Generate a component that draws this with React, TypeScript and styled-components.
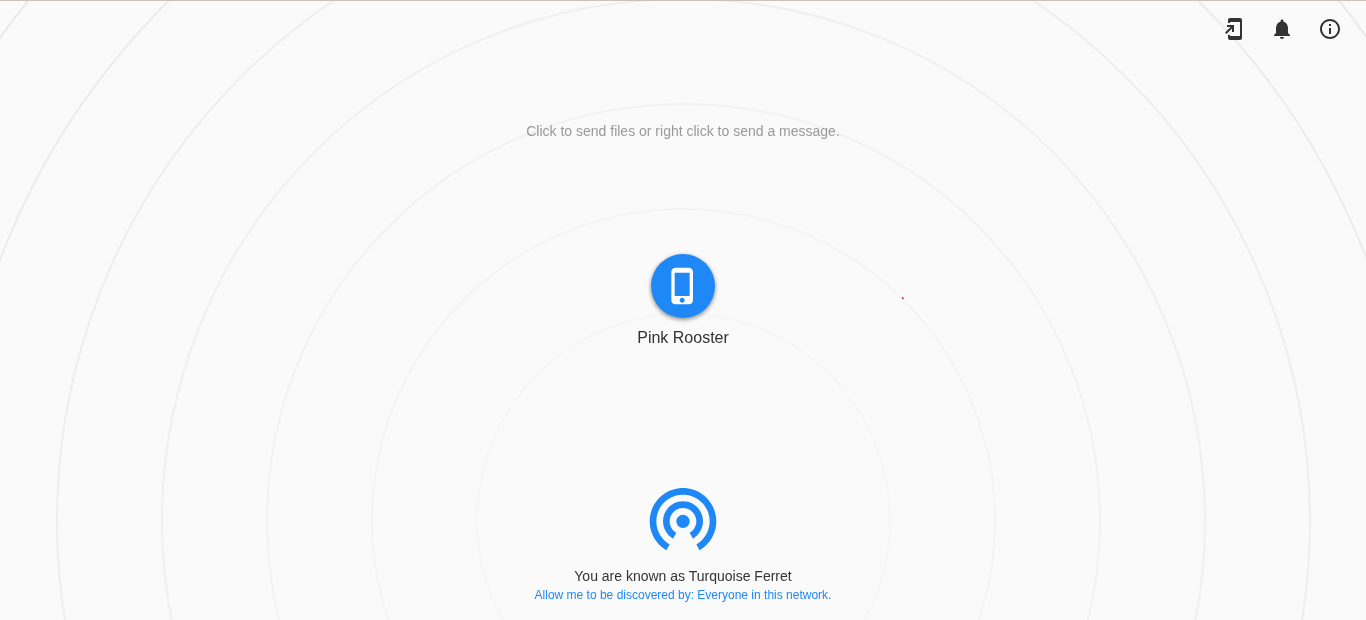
import React from 'react';
import styled, { createGlobalStyle } from 'styled-components';

const GlobalStyle = createGlobalStyle`
  *, *::before, *::after { box-sizing: border-box; }
  body {
    margin: 0;
    background: #fafafa;
    color: #333333;
    font-family: "Liberation Sans", Arial, sans-serif;
  }
`;

const Page = styled.div`
  display: flex;
  flex-direction: column;
  min-height: 100vh;
  border-top: 1px solid #cbc0bb;
`;

const Backdrop = styled.svg`
  position: fixed;
  inset: 0;
  width: 100%;
  height: 100%;
  z-index: -1;
  fill: none;
`;

const Header = styled.header`
  display: flex;
  justify-content: flex-end;
  align-items: center;
  gap: 8px;
  height: 56px;
  padding: 0 16px;
`;

const IconButton = styled.button`
  display: flex;
  align-items: center;
  justify-content: center;
  width: 40px;
  height: 40px;
  padding: 0;
  border: 0;
  border-radius: 50%;
  background: transparent;
  color: inherit;
  cursor: pointer;
`;

const Icon = styled.svg<{ $size: number }>`
  display: block;
  width: ${(p) => p.$size}px;
  height: ${(p) => p.$size}px;
  fill: currentColor;
`;

const Main = styled.main`
  flex: 1;
  display: flex;
  flex-direction: column;
  align-items: center;
  padding-top: 64px;
`;

const Instructions = styled.p`
  margin: 0;
  font-size: 14px;
  line-height: 20px;
  color: #999999;
  text-align: center;
`;

const Peers = styled.div`
  flex: 1;
  display: flex;
  align-items: center;
  justify-content: center;
  padding-bottom: 18px;
`;

const Peer = styled.button`
  display: flex;
  flex-direction: column;
  align-items: center;
  gap: 10px;
  padding: 0;
  border: 0;
  background: transparent;
  color: inherit;
  font-family: inherit;
  font-size: 16px;
  line-height: 20px;
  cursor: pointer;
`;

const PeerBadge = styled.span`
  display: flex;
  padding: 12px;
  border-radius: 50%;
  background: #1e88f7;
  color: #ffffff;
  box-shadow: 0 2px 4px rgba(0, 0, 0, 0.3), 0 1px 5px rgba(0, 0, 0, 0.2);
`;

const Footer = styled.footer`
  display: flex;
  flex-direction: column;
  align-items: center;
  padding-bottom: 16px;
  text-align: center;
`;

const Beacon = styled.div`
  margin-bottom: 8px;
  color: #1e88f7;
`;

const DisplayName = styled.div`
  font-size: 14px;
  line-height: 20px;
`;

const Discovery = styled.div`
  font-size: 12px;
  line-height: 18px;
  color: #1e88f7;
`;

const paths = {
  home: 'M18 1.01L8 1c-1.1 0-2 .9-2 2v3h2V5h10v14H8v-1H6v3c0 1.1.9 2 2 2h10c1.1 0 2-.9 2-2V3c0-1.1-.9-1.99-2-1.99zM10 15h2V8H5v2h3.59L3 15.59 4.41 17 10 11.41z',
  bell: 'M12 22c1.1 0 2-.9 2-2h-4c0 1.1.89 2 2 2zm6-6v-5c0-3.07-1.64-5.64-4.5-6.32V4c0-.83-.67-1.5-1.5-1.5s-1.5.67-1.5 1.5v.68C7.63 5.36 6 7.92 6 11v5l-2 2v1h16v-1l-2-2z',
  info: 'M11 17h2v-6h-2v6zm1-15C6.48 2 2 6.48 2 12s4.48 10 10 10 10-4.48 10-10S17.52 2 12 2zm0 18c-4.41 0-8-3.59-8-8s3.59-8 8-8 8 3.59 8 8-3.59 8-8 8zM11 9h2V7h-2v2z',
  phone: 'M15.5 1h-8C6.12 1 5 2.12 5 3.5v17C5 21.88 6.12 23 7.5 23h8c1.38 0 2.5-1.12 2.5-2.5v-17C18 2.12 16.88 1 15.5 1zm-4 21c-.83 0-1.5-.67-1.5-1.5s.67-1.5 1.5-1.5 1.5.67 1.5 1.5-.67 1.5-1.5 1.5zm4.5-4H7V4h9v14z',
  tethering: 'M12 11c-1.1 0-2 .9-2 2s.9 2 2 2 2-.9 2-2-.9-2-2-2zm6 2c0-3.31-2.69-6-6-6s-6 2.69-6 6c0 2.22 1.21 4.15 3 5.19l1-1.74c-1.19-.7-2-1.97-2-3.45 0-2.21 1.79-4 4-4s4 1.79 4 4c0 1.48-.81 2.75-2 3.45l1 1.74c1.79-1.04 3-2.97 3-5.19zM12 3C6.48 3 2 7.48 2 13c0 3.7 2.01 6.92 4.99 8.65l1-1.73C5.61 18.53 4 15.96 4 13c0-4.42 3.58-8 8-8s8 3.58 8 8c0 2.96-1.61 5.53-4 6.92l1 1.73c2.99-1.73 5-4.95 5-8.65 0-5.52-4.48-10-10-10z',
};

function Glyph({ name, size = 24 }: { name: keyof typeof paths; size?: number }) {
  return (
    <Icon $size={size} viewBox="0 0 24 24" aria-hidden="true">
      <path d={paths[name]} />
    </Icon>
  );
}

const radii = [101.5, 206.5, 311.5, 416.5, 521.5, 626.5, 731.5, 836.5];

/* Rings spreading from the beacon, darker the further out they are. */
function Rings() {
  return (
    <Backdrop viewBox="-683 -521 1366 620" preserveAspectRatio="xMidYMax slice" aria-hidden="true">
      {radii.map((r, i) => {
        const c = Math.round(255 * (1 - r / 1366));
        const alpha = i === 0 ? 0.06 : 0.1;
        return (
          <circle key={r} cx="0.5" cy="-0.5" r={r} stroke={`rgba(${c}, ${c}, ${c}, ${alpha})`} strokeWidth="2" />
        );
      })}
      <path d="M219 -224h1v1h1v1h-2z" fill="#e8363a" />
    </Backdrop>
  );
}

export default function App() {
  return (
    <>
      <GlobalStyle />
      <Rings />
      <Page>
        <Header>
          <IconButton type="button" aria-label="Add to home screen">
            <Glyph name="home" />
          </IconButton>
          <IconButton type="button" aria-label="Enable notifications">
            <Glyph name="bell" />
          </IconButton>
          <IconButton type="button" aria-label="About">
            <Glyph name="info" />
          </IconButton>
        </Header>
        <Main>
          <Instructions>Click to send files or right click to send a message.</Instructions>
          <Peers>
            <Peer type="button">
              <PeerBadge>
                <Glyph name="phone" size={40} />
              </PeerBadge>
              Pink Rooster
            </Peer>
          </Peers>
        </Main>
        <Footer>
          <Beacon>
            <Glyph name="tethering" size={80} />
          </Beacon>
          <DisplayName>You are known as Turquoise Ferret</DisplayName>
          <Discovery>Allow me to be discovered by: Everyone in this network.</Discovery>
        </Footer>
      </Page>
    </>
  );
}
